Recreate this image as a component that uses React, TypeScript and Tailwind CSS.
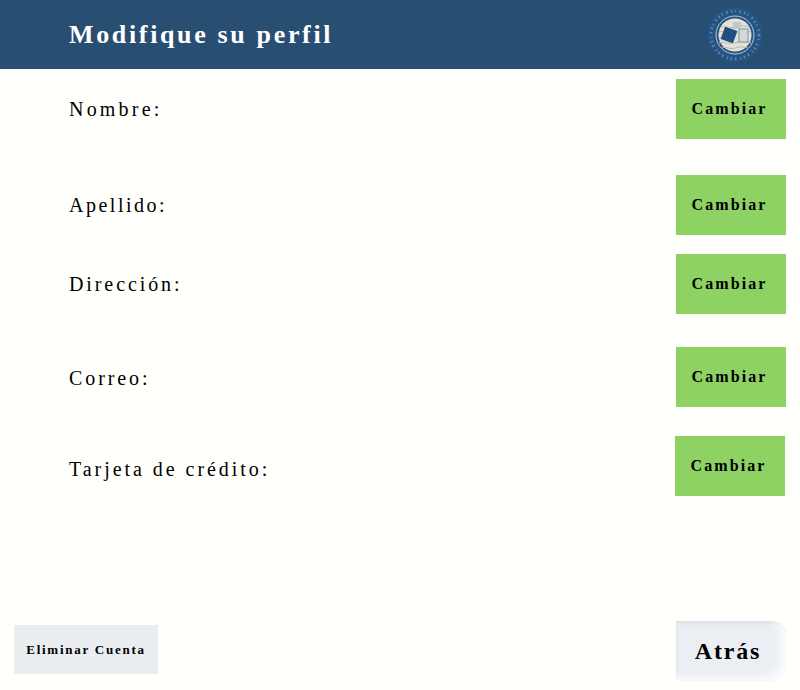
const FONT = "font-['Liberation_Serif',serif]";

type Field = { label: string; rowClass: string; labelClass: string };

const fields: Field[] = [
  { label: "Nombre:", rowClass: "mt-[10px] pr-[14px]", labelClass: "tracking-[3.2px]" },
  { label: "Apellido:", rowClass: "mt-[36px] pr-[14px]", labelClass: "tracking-[2.5px]" },
  { label: "Dirección:", rowClass: "mt-[19px] pr-[14px]", labelClass: "tracking-[2.9px]" },
  { label: "Correo:", rowClass: "mt-[33px] pr-[14px]", labelClass: "tracking-[2.9px] pt-[2px]" },
  { label: "Tarjeta de crédito:", rowClass: "mt-[29px] pr-[15px]", labelClass: "tracking-[2.95px] pt-[6px]" },
];

const Logo = () => (
  <svg width="58" height="58" viewBox="0 0 58 58" className="block">
    <circle cx="29" cy="29" r="28" fill="#265482" />
    <circle cx="29" cy="29" r="24" fill="none" stroke="#a9c0d4" strokeWidth="3" strokeDasharray="1.5 2.5 1 4 1.5 3" opacity="0.45" />
    <circle cx="29" cy="29" r="19" fill="none" stroke="#b4cadb" strokeWidth="1" />
    <circle cx="29" cy="29" r="16.5" fill="#e6e1d6" />
    <path d="M15 21c5-2 8 2 14 0s9-1 14 0M13 26c5-2 9 2 16 0s10-1 16 0M13 37c5-2 9 2 16 0s10-1 16 0M16 42c5-2 7 2 13 0s8-1 13 0" fill="none" stroke="#b9b7ae" strokeWidth="1" />
    <rect x="33" y="23" width="9" height="13" fill="#d3d8d8" stroke="#7c95a8" strokeWidth="1" />
    <rect x="27" y="16" width="8" height="7" fill="#b9c5cc" opacity="0.9" />
    <rect x="16" y="22" width="14" height="14" fill="#1f4f80" stroke="#e6e1d6" strokeWidth="0.8" transform="rotate(20 23 29)" />
  </svg>
);

const Row = ({ label, rowClass, labelClass }: Field) => (
  <div className={`flex items-center justify-between pl-[69px] ${rowClass}`}>
    <span className={`text-[20px] leading-[24px] text-black ${labelClass}`}>{label}</span>
    <button className="w-[110px] h-[60px] pr-[3px] bg-[#8dd263] text-[16px] font-bold tracking-[2.1px] text-black">
      Cambiar
    </button>
  </div>
);

export default function App() {
  return (
    <div className={`w-[800px] h-[690px] flex flex-col bg-[#fffffb] ${FONT}`}>
      <header className="h-[69px] shrink-0 flex items-center justify-between pl-[69px] pr-[36px] bg-[#284e72]">
        <h1 className="text-[26px] font-bold tracking-[2.65px] text-white">Modifique su perfil</h1>
        <Logo />
      </header>

      {fields.map((f) => (
        <Row key={f.label} {...f} />
      ))}

      <footer className="mt-auto mb-[9px] flex items-start justify-between pl-[14px] pr-[14px]">
        <button className="mt-[4px] w-[144px] h-[49px] bg-[#ebeef1] text-[13px] font-bold tracking-[1.75px] text-black">
          Eliminar Cuenta
        </button>
        <button className="w-[110px] h-[60px] pr-[6px] rounded-r-[14px] bg-[#ebeef3] shadow-[inset_-6px_-4px_8px_rgba(255,255,255,0.8),inset_0_2px_3px_rgba(200,205,215,0.5)] text-[24px] font-bold tracking-[1.8px] text-black">
          Atrás
        </button>
      </footer>
    </div>
  );
}
